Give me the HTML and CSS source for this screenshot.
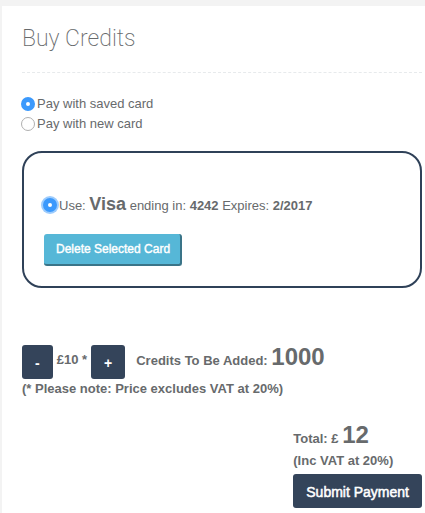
FILE: index.html
```html
<!DOCTYPE html>
<html lang="en">
<head>
<meta charset="utf-8">
<meta name="viewport" content="width=device-width, initial-scale=1">
<title>Buy Credits</title>
<link rel="stylesheet" href="styles.css">
</head>
<body>
<main class="panel">
  <h1 class="title">Buy Credits</h1>
  <form class="form">
    <div class="methods">
      <label class="option"><input class="radio" type="radio" name="method" checked>Pay with saved card</label>
      <label class="option"><input class="radio" type="radio" name="method">Pay with new card</label>
    </div>
    <section class="saved">
      <label class="card"><input class="radio radio-focus" type="radio" name="card" checked><span>Use: <strong class="brand">Visa</strong> ending in: <strong>4242</strong> Expires: <strong>2/2017</strong></span></label>
      <button class="delete" type="button">Delete Selected Card</button>
    </section>
    <div class="amount">
      <button class="btn" type="button">-</button>
      <span>£10 *</span>
      <button class="btn" type="button">+</button>
      <span class="credits">Credits To Be Added: <span class="big">1000</span></span>
    </div>
    <p class="note">(* Please note: Price excludes VAT at 20%)</p>
    <div class="checkout">
      <p class="total">Total: £ <span class="big">12</span></p>
      <p class="vat">(Inc VAT at 20%)</p>
      <button class="btn submit" type="submit">Submit Payment</button>
    </div>
  </form>
</main>
</body>
</html>
```
FILE: styles.css
```css
* {
  box-sizing: border-box;
}

body {
  margin: 0;
  padding: 6px 0 0 2px;
  background: #f3f3f3;
  color: #676a6c;
  font: 13px/20px "Liberation Sans", Arial, sans-serif;
}

.panel {
  min-height: calc(100vh - 6px);
  padding: 16px 3px 5px 20px;
  background: #fff;
}

.title {
  margin: 0;
  padding-bottom: 16px;
  border-bottom: 1px dashed #e7eaec;
  font: 200 23px/34px Roboto, "Liberation Sans", sans-serif;
}

.methods {
  display: flex;
  flex-direction: column;
  align-items: flex-start;
  margin: 21px 0 17px;
}

.option,
.card {
  display: flex;
  align-items: center;
  gap: 2px;
  margin-left: -1px;
}

.radio {
  flex: none;
  appearance: none;
  width: 14px;
  height: 14px;
  margin: 0;
  border: 1px solid #b0b0b0;
  border-radius: 50%;
  background: #fff;
}

.radio:checked {
  border: 5px solid #3b99fc;
}

.radio-focus {
  box-shadow: 0 0 0 2px #9dccfd;
}

.saved {
  padding: 40px 20px 20px;
  border: 2px solid #2f4158;
  border-radius: 20px;
}

.card {
  line-height: 22px;
}

.brand {
  font-size: 18px;
}

.delete {
  display: block;
  margin-top: 17px;
  padding: 7px 10px 6px 12px;
  border: solid #3a7488;
  border-width: 0 2px 2px 0;
  border-radius: 3px;
  background: #56b7d7;
  color: #fff;
  font: 12px/17px "Liberation Sans", Arial, sans-serif;
  -webkit-text-stroke: 0.4px #fff;
}

.amount {
  display: flex;
  align-items: flex-start;
  gap: 4px;
  margin-top: 57px;
  line-height: 30px;
  font-weight: bold;
}

.btn {
  height: 34px;
  padding: 2px 13px 0;
  border: 0;
  border-radius: 3px;
  background: #34445a;
  color: #fff;
  font: bold 14px/32px "Liberation Sans", Arial, sans-serif;
}

.submit {
  font-weight: normal;
  -webkit-text-stroke: 0.5px #fff;
}

.credits {
  margin-left: 7px;
}

.big {
  font-size: 24px;
  line-height: 24px;
}

.note {
  margin: 0;
  font-weight: bold;
}

.checkout {
  width: fit-content;
  margin: 24px 0 0 auto;
  font-weight: bold;
}

.total {
  margin: 0;
  line-height: 24px;
}

.vat {
  margin: 0 0 3px;
}
```
